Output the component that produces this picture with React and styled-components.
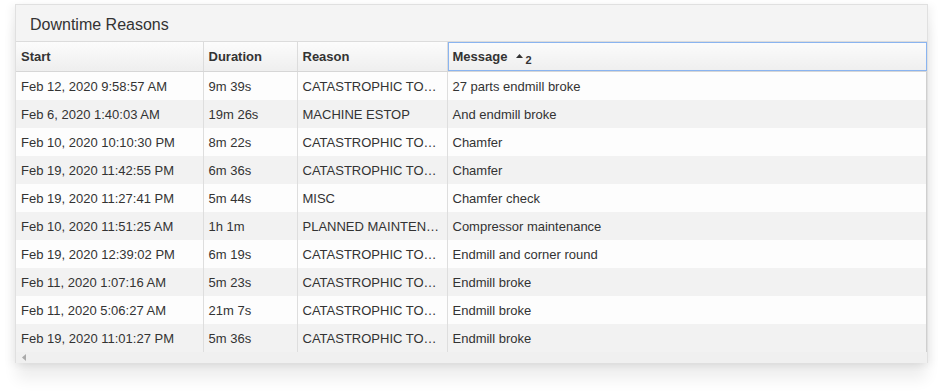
import React from "react";
import styled, { createGlobalStyle } from "styled-components";

const Global = createGlobalStyle`
  body {
    margin: 0;
    background: #fff;
    font-family: "Liberation Sans", Arial, sans-serif;
    color: #333;
  }
`;

const Page = styled.div`
  padding: 4px 10px 28px 15px;
  width: 938px;
  box-sizing: border-box;
`;

const Panel = styled.div`
  width: 913px;
  border: 1px solid #e0e0e0;
  border-bottom: none;
  box-sizing: border-box;
  box-shadow: 0 18px 14px -2px rgba(0, 0, 0, 0.07), -4px 2px 8px rgba(0, 0, 0, 0.05),
    4px 2px 8px rgba(0, 0, 0, 0.05);
  background: #fff;
`;

const Title = styled.div`
  height: 37px;
  box-sizing: border-box;
  padding: 3px 0 0 14px;
  background: #f4f4f4;
  border-bottom: 1px solid #dcdcdc;
  display: flex;
  align-items: center;
  font-size: 16px;
  color: #333;
`;

const Table = styled.table`
  width: 100%;
  table-layout: fixed;
  border-collapse: collapse;
  font-size: 13px;
`;

const Th = styled.th`
  height: 29px;
  padding: 0 5px;
  text-align: left;
  font-weight: bold;
  color: #333;
  background: linear-gradient(#fcfcfc, #eeeeee);
  border-right: 1px solid #dcdcdc;
  border-bottom: 1px solid #d6d6d6;
  box-shadow: ${(p) => (p.$focus ? "inset 0 0 0 1px #8ab4f0" : "none")};
  white-space: nowrap;
  &:last-child {
    border-right: none;
  }
`;

const Row = styled.tr`
  background: ${(p) => (p.$alt ? "#f2f2f2" : "#fdfdfd")};
`;

const Td = styled.td`
  height: 28px;
  padding: 0 5px;
  border-right: 1px solid #dedede;
  white-space: nowrap;
  overflow: hidden;
  text-overflow: ellipsis;
  color: #333;
  &:last-child {
    border-right: 1px solid #cfcfcf;
  }
`;

const SortArrow = styled.svg`
  margin-left: 9px;
  margin-right: 2px;
  vertical-align: 3px;
`;

const SortIndex = styled.span`
  font-size: 11px;
  line-height: 0;
  vertical-align: -3px;
`;

const ScrollBar = styled.div`
  height: 11px;
  background: #f0f0f0;
  display: flex;
  align-items: center;
  padding-left: 6px;
`;

const rows = [
  ["Feb 12, 2020 9:58:57 AM", "9m 39s", "CATASTROPHIC TOOL FAILURE", "27 parts endmill broke"],
  ["Feb 6, 2020 1:40:03 AM", "19m 26s", "MACHINE ESTOP", "And endmill broke"],
  ["Feb 10, 2020 10:10:30 PM", "8m 22s", "CATASTROPHIC TOOL FAILURE", "Chamfer"],
  ["Feb 19, 2020 11:42:55 PM", "6m 36s", "CATASTROPHIC TOOL FAILURE", "Chamfer"],
  ["Feb 19, 2020 11:27:41 PM", "5m 44s", "MISC", "Chamfer check"],
  ["Feb 10, 2020 11:51:25 AM", "1h 1m", "PLANNED MAINTENANCE", "Compressor maintenance"],
  ["Feb 19, 2020 12:39:02 PM", "6m 19s", "CATASTROPHIC TOOL FAILURE", "Endmill and corner round"],
  ["Feb 11, 2020 1:07:16 AM", "5m 23s", "CATASTROPHIC TOOL FAILURE", "Endmill broke"],
  ["Feb 11, 2020 5:06:27 AM", "21m 7s", "CATASTROPHIC TOOL FAILURE", "Endmill broke"],
  ["Feb 19, 2020 11:01:27 PM", "5m 36s", "CATASTROPHIC TOOL FAILURE", "Endmill broke"],
];

export default function App() {
  return (
    <Page>
      <Global />
      <Panel>
        <Title>Downtime Reasons</Title>
        <Table>
          <colgroup>
            <col style={{ width: 187 }} />
            <col style={{ width: 94 }} />
            <col style={{ width: 150 }} />
            <col />
          </colgroup>
          <thead>
            <tr>
              <Th>Start</Th>
              <Th>Duration</Th>
              <Th>Reason</Th>
              <Th $focus>
                Message
                <SortArrow width="7" height="4" viewBox="0 0 7 4">
                  <path d="M0 4 L3.5 0 L7 4 Z" fill="#333" />
                </SortArrow>
                <SortIndex>2</SortIndex>
              </Th>
            </tr>
          </thead>
          <tbody>
            {rows.map((r, i) => (
              <Row key={i} $alt={i % 2 === 1}>
                {r.map((c, j) => (
                  <Td key={j}>{c}</Td>
                ))}
              </Row>
            ))}
          </tbody>
        </Table>
        <ScrollBar>
          <svg width="4" height="7" viewBox="0 0 4 7">
            <path d="M4 0 L0 3.5 L4 7 Z" fill="#aaa" />
          </svg>
        </ScrollBar>
      </Panel>
    </Page>
  );
}
